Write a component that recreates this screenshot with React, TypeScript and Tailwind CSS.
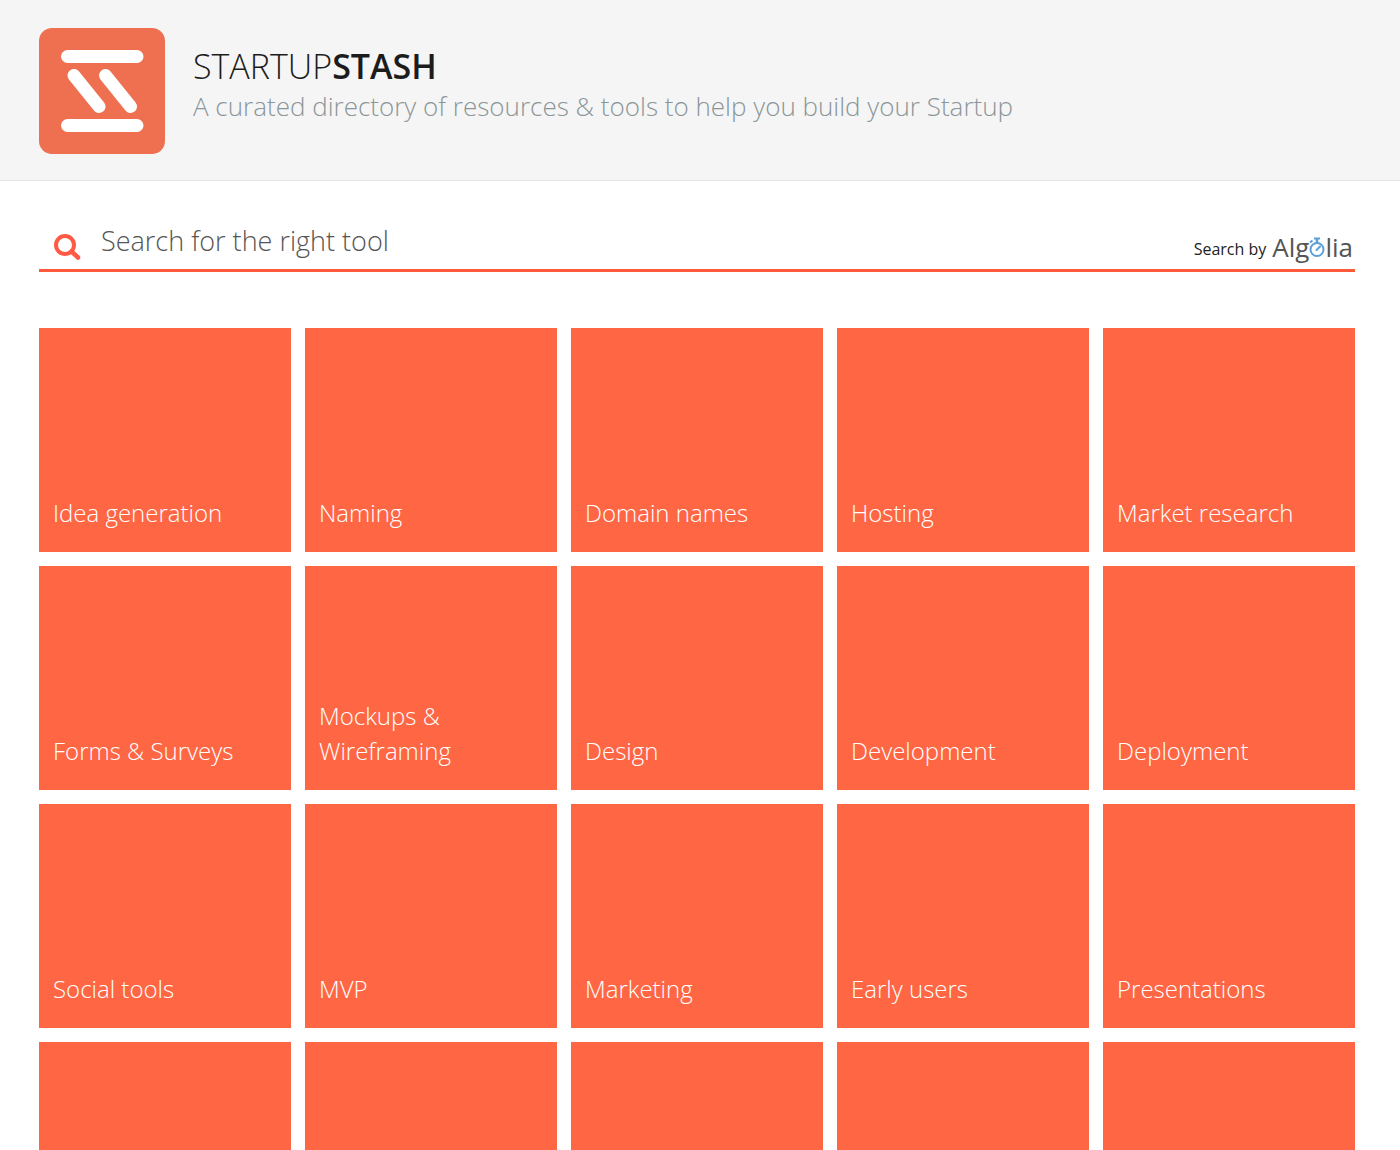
import React, { useState } from "react";

interface Category {
  name: string;
  slug: string;
}

const categories: Category[] = [
  { name: "Idea generation", slug: "idea-generation" },
  { name: "Naming", slug: "naming" },
  { name: "Domain names", slug: "domain-names" },
  { name: "Hosting", slug: "hosting" },
  { name: "Market research", slug: "market-research" },
  { name: "Forms & Surveys", slug: "forms-surveys" },
  { name: "Mockups & Wireframing", slug: "mockups-wireframing" },
  { name: "Design", slug: "design" },
  { name: "Development", slug: "development" },
  { name: "Deployment", slug: "deployment" },
  { name: "Social tools", slug: "social-tools" },
  { name: "MVP", slug: "mvp" },
  { name: "Marketing", slug: "marketing" },
  { name: "Early users", slug: "early-users" },
  { name: "Presentations", slug: "presentations" },
];

const placeholders = [0, 1, 2, 3, 4];

const Logo = () => (
  <svg viewBox="0 0 126 126" className="size-[126px] shrink-0" aria-hidden="true">
    <rect width="126" height="126" rx="13" fill="#ee7050" />
    <g stroke="#fff" strokeWidth="13" strokeLinecap="round">
      <path d="M28.5 28.5H98" />
      <path d="M28.5 97.5H98" />
      <path d="M35 47.5L60 78.5" />
      <path d="M66.5 47.5L91.5 78.5" />
    </g>
  </svg>
);

const SearchIcon = () => (
  <svg viewBox="0 0 28 28" className="size-7 shrink-0" fill="none" stroke="#ff5a43" aria-hidden="true">
    <circle cx="12" cy="12" r="9" strokeWidth="4" />
    <path d="M18.5 18.5L25 24.5" strokeWidth="4.5" strokeLinecap="round" />
  </svg>
);

const Stopwatch = () => (
  <svg viewBox="0 0 16 22" className="h-[22px] w-4 shrink-0" fill="none" stroke="#5a9fd8" aria-hidden="true">
    <circle cx="8" cy="14.5" r="6.5" strokeWidth="2" />
    <path d="M5 3.5H11" strokeWidth="2" />
    <path d="M8 4V8" strokeWidth="2.5" />
    <path d="M1 7.5L3.5 5.5" strokeWidth="2" />
    <path d="M7.5 15L11 11.5" strokeWidth="2" strokeLinecap="round" />
  </svg>
);

const Header = () => (
  <header className="flex gap-7 border-b border-[#e4e4e4] bg-[#f5f5f5] pt-7 pr-[45px] pb-[26px] pl-[39px]">
    <Logo />
    <div className="pt-4">
      <h1 className="text-[34px] leading-[44px] font-light text-[#1c1c1c]">
        STARTUP<strong className="font-semibold">STASH</strong>
      </h1>
      <p className="text-[26px] leading-9 font-light text-[#8b9699]">
        A curated directory of resources &amp; tools to help you build your Startup
      </p>
    </div>
  </header>
);

const SearchBar = () => {
  const [query, setQuery] = useState("");

  return (
    <form
      role="search"
      onSubmit={(e) => e.preventDefault()}
      className="flex items-end border-b-3 border-[#ff5a3c] pl-3.5"
    >
      <label htmlFor="search" className="mr-5 pb-2">
        <SearchIcon />
      </label>
      <input
        id="search"
        type="text"
        aria-label="Search for the right tool"
        placeholder="Search for the right tool"
        value={query}
        onChange={(e) => setQuery(e.target.value)}
        className="mb-2 h-10 min-w-0 flex-1 bg-transparent text-[27px] font-light text-[#444] outline-none placeholder:text-[#555]"
      />
      <a href="#algolia" className="flex items-center gap-1.5 pr-0.5 pb-0.5 text-base text-[#222]">
        <span className="pt-1">Search by</span>
        <span className="flex h-10 items-baseline text-[26px] leading-10 font-medium text-[#555]" aria-label="Algolia">
          Alg
          <Stopwatch />
          lia
        </span>
      </a>
    </form>
  );
};

const CategoryTile = ({ name, slug }: Category) => (
  <a
    href={`#${slug}`}
    className="flex h-56 items-end bg-[#ff6644] px-3.5 pb-[22px] text-2xl leading-[35px] font-light text-white hover:bg-[#f45a38]"
  >
    {name}
  </a>
);

const App = () => {
  return (
    <div className="min-h-screen bg-white font-['Open_Sans',sans-serif]">
      <Header />
      <main className="pt-10 pr-[45px] pl-[39px]">
        <SearchBar />
        <ul className="mt-14 grid grid-cols-5 gap-3.5">
          {categories.map((category) => (
            <li key={category.slug}>
              <CategoryTile {...category} />
            </li>
          ))}
          {placeholders.map((n) => (
            <li key={n} className="h-56 bg-[#ff6644]" aria-hidden="true" />
          ))}
        </ul>
      </main>
    </div>
  );
};

export default App;
